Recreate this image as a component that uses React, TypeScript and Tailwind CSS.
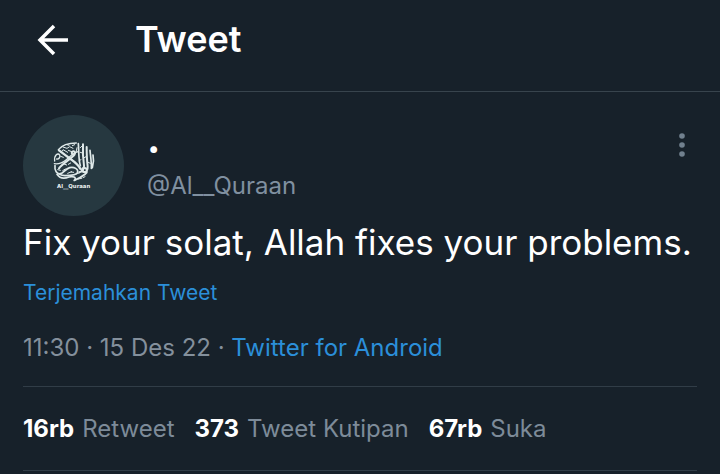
function BackIcon() {
  return (
    <svg viewBox="0 0 32 32" className="size-8" fill="none" stroke="currentColor" strokeWidth="3.500" aria-hidden="true">
      <path d="M17 2 3 16l14 14M3.500 16H31" />
    </svg>
  );
}

function MoreIcon() {
  return (
    <svg viewBox="0 0 6 24" className="h-6 w-1.5" fill="currentColor" aria-hidden="true">
      <circle cx="3" cy="3" r="2.800" />
      <circle cx="3" cy="12" r="2.800" />
      <circle cx="3" cy="21" r="2.800" />
    </svg>
  );
}

function Avatar() {
  return (
    <svg viewBox="24 30 303 303" className="size-[101px] shrink-0" role="img" aria-label="Al__Quraan">
      <circle cx="175.500" cy="181.500" r="151.500" fill="#263840" />
      <g fill="none" stroke="#dfe9e9" strokeLinecap="round" strokeLinejoin="round">
        <g strokeWidth="4">
          <path d="M130 134c10-12 30-20 54-20" />
          <path d="M119 168c-2-18 10-26 15-18 3 7-3 13-9 12" />
          <path d="M118 176c12 2 26-4 36-12 12-10 22-22 36-24" />
          <path d="M132 136l36 27c12 9 22 16 28 28" strokeWidth="7" />
          <path d="M132 190c10-14 30-24 46-40 4-5 2-12-4-11-6 2-4 11 4 11" strokeWidth="6" />
          <path d="M120 182c-2 14 6 26 16 24 10-1 14-14 28-18 14-3 26 4 24 14-3 10-24 10-38 10-10 0-16-4-20-6" strokeWidth="5" />
          <path d="M126 208c8 12 22 14 36 8 12-3 22 0 18 8" strokeWidth="5" />
          <path d="M190 116c2 24 0 44 6 66" strokeWidth="5" />
          <path d="M204 118c-1 22 0 44 3 64 1 12-6 18-14 20" strokeWidth="6" />
          <path d="M215 126c0 22 1 42 3 58 1 12-5 18-12 17-8-2-6-13 2-13 8 1 12 12 2 20-10 8-22 14-32 18" strokeWidth="6" />
          <path d="M225 136c2 20 5 40 4 54M234 150c3 14 2 26-2 38" strokeWidth="5" />
        </g>
        <g strokeWidth="3">
          <path d="M144 126l12 4 8-5 10 5M156 119l6 2M172 122l7-3M138 142l6-8 14 8M160 136l10 4M186 128l-3 14" />
          <path d="M145 157l-8-3M147 177l8 3M160 178l7-4M143 197l8-5M168 201l8 1M181 171l-8-6M128 194l8 2M158 205l12-5" />
          <path d="M196 142l6 2M198 164l-6 3M208 158l5-3M183 207l10-3M190 222l10-2M204 218l6-3M196 128l4-4M220 172l6 3" />
        </g>
      </g>
      <text x="176" y="249" textAnchor="middle" className="fill-[#edf3f3] font-['DejaVu_Sans',sans-serif] text-[16px] font-bold">
        Al__Quraan
      </text>
    </svg>
  );
}

const stats = [
  { count: "16rb", label: "Retweet" },
  { count: "373", label: "Tweet Kutipan" },
  { count: "67rb", label: "Suka" },
];

export default function App() {
  return (
    <div className="min-h-screen bg-[#17212a] font-['Inter',sans-serif] text-white">
      <header className="flex h-[92px] items-center gap-[66px] border-b border-[#38444d] pb-3 pl-[37px]">
        <button type="button" aria-label="Kembali">
          <BackIcon />
        </button>
        <h1 className="pb-0.5 text-[36px] leading-10 font-semibold">Tweet</h1>
      </header>

      <main className="px-[23px] pt-[23px]">
        <article>
          <div className="flex items-start">
            <Avatar />
            <div className="ml-[23px] flex-1 pt-2">
              <p className="text-[40px] leading-8 font-bold">.</p>
              <p className="mt-[15px] text-[24px] leading-8 text-[#8090a0]">@Al__Quraan</p>
            </div>
            <button type="button" aria-label="Lainnya" className="mt-[18px] mr-3 text-[#71808e]">
              <MoreIcon />
            </button>
          </div>
          <p className="mt-0.5 text-[35px] leading-12 whitespace-nowrap">Fix your solat, Allah fixes your problems.</p>
          <a href="#terjemahkan" className="mt-[11px] block w-fit text-[21px] leading-8 text-[#2b8fd9]">
            Terjemahkan Tweet
          </a>
          <p className="mt-[23px] text-[24px] leading-8 text-[#84909c]">
            11:30 · 15 Des 22 ·{" "}
            <a href="#android" className="text-[#2b8fd9]">
              Twitter for Android
            </a>
          </p>
          <ul className="mt-[22px] flex h-[85px] items-center gap-5 border-y border-[#313d47]">
            {stats.map((s) => (
              <li key={s.label} className="flex gap-2 text-[24px] leading-8">
                <span className="font-bold">{s.count}</span>
                <span className="text-[#7d8b99]">{s.label}</span>
              </li>
            ))}
          </ul>
        </article>
      </main>
    </div>
  );
}
